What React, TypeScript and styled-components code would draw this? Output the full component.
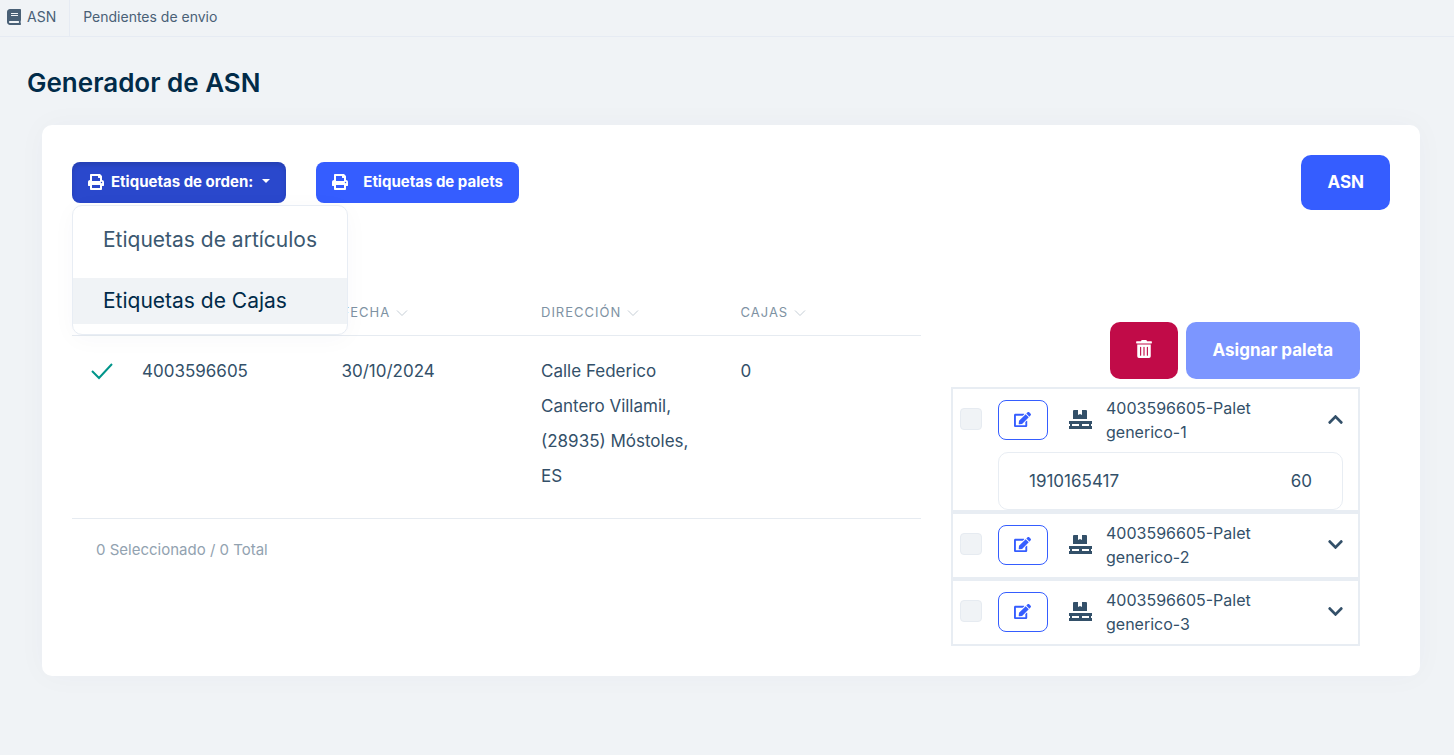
import React, { useState } from "react";
import styled, { createGlobalStyle, css } from "styled-components";
import { FaBook, FaChevronDown, FaChevronUp, FaEdit, FaPrint, FaTrashAlt } from "react-icons/fa";

const GlobalStyle = createGlobalStyle`
  *, *::before, *::after { box-sizing: border-box; }
  body {
    margin: 0;
    min-height: 100vh;
    background: #f0f3f6;
    color: #335069;
    font-family: Inter, "Liberation Sans", sans-serif;
    font-size: 16px;
    line-height: 24px;
  }
  button { font-family: inherit; cursor: pointer; }
`;

const TopBar = styled.nav`
  display: flex;
  height: 37px;
  border-bottom: 1px solid #e6ebf3;
`;

const TopLink = styled.a<{ $first?: boolean }>`
  display: flex;
  align-items: center;
  gap: 5px;
  padding: 0 13px 3px;
  color: #496076;
  font-size: 14px;
  line-height: 20px;
  text-decoration: none;
  ${(p) =>
    p.$first &&
    css`
      padding-left: 6px;
      border-right: 1px solid #e6ebf3;
    `}
`;

const Page = styled.main`
  padding: 28px 34px 79px 42px;
`;

const Title = styled.h1`
  margin: 0 0 24px -15px;
  color: #012b49;
  font-size: 26px;
  font-weight: 600;
  line-height: 36px;
`;

const Card = styled.section`
  padding: 30px;
  background: #fff;
  border-radius: 10px;
  box-shadow: 0 0 30px rgba(20, 60, 90, 0.03);
`;

const Toolbar = styled.div`
  display: flex;
  align-items: center;
  gap: 30px;
`;

const Button = styled.button<{ $size?: "small" | "large"; $tone?: "active" | "danger" | "muted" }>`
  display: inline-flex;
  align-items: center;
  justify-content: center;
  border: 0;
  color: #fff;
  font-weight: 700;
  background: ${(p) =>
    p.$tone === "active" ? "#2a48cc" : p.$tone === "danger" ? "#c10b48" : p.$tone === "muted" ? "#7c96ff" : "#355dff"};
  ${(p) =>
    p.$size === "small"
      ? css`
          height: 41px;
          padding: 0 16px 2px;
          border-radius: 8px;
          font-size: 15px;
        `
      : css`
          height: ${p.$size === "large" ? "57px" : "55px"};
          padding: 0 ${p.$tone === "muted" ? "27px" : "26px"} 1px;
          border-radius: 10px;
          font-size: 17px;
        `}
  ${(p) => p.$tone === "active" && css`box-shadow: inset 0 3px 5px rgba(0, 0, 0, 0.13);`}
`;

const PrintIcon = styled(FaPrint)<{ $gap: number }>`
  width: 16px;
  height: 16px;
  margin-right: ${(p) => p.$gap}px;
`;

const Caret = styled.span`
  margin: 0 0 1px 9px;
  border: 4px solid transparent;
  border-top-color: #fff;
  border-bottom: 0;
`;

const Dropdown = styled.div`
  position: relative;
`;

const Menu = styled.div`
  position: absolute;
  z-index: 2;
  top: calc(100% + 2px);
  left: 0;
  display: flex;
  flex-direction: column;
  gap: 15px;
  padding: 11px 0 10px;
  background: #fff;
  border: 1px solid #e8edf4;
  border-radius: 10px;
  box-shadow: 0 4px 24px rgba(20, 60, 90, 0.03);
`;

const MenuItem = styled.button<{ $active?: boolean }>`
  height: 46px;
  padding: 0 30px;
  border: 0;
  background: ${(p) => (p.$active ? "#f0f3f6" : "transparent")};
  color: ${(p) => (p.$active ? "#012b49" : "#3b5870")};
  font-size: 21px;
  line-height: 32px;
  text-align: left;
  white-space: nowrap;
`;

const Spacer = styled.span`
  flex: 1;
`;

const Body = styled.div`
  display: grid;
  grid-template-columns: minmax(0, 849fr) minmax(0, 409fr);
  gap: 30px;
  padding: 80px 30px 0 0;
`;

const Table = styled.table`
  width: 100%;
  table-layout: fixed;
  border-collapse: separate;
  border-spacing: 0;
`;

const HeadCell = styled.th<{ $icon?: boolean }>`
  width: ${(p) => (p.$icon ? "51px" : "auto")};
  height: 46px;
  padding: 0 19px 2px;
  border-bottom: 1px solid #e6ebf1;
  color: #7e92a3;
  font-size: 13px;
  font-weight: 400;
  line-height: 20px;
  letter-spacing: 1px;
  text-align: left;
  white-space: nowrap;
`;

const SortIcon = styled.svg`
  margin-left: 6px;
  color: #c5ced6;
  vertical-align: 0;
`;

const Cell = styled.td<{ $icon?: boolean }>`
  padding: 18px 19px 24px;
  ${(p) => p.$icon && css`padding: 26px 0 0 18px;`}
  border-bottom: 1px solid #e6ebf1;
  font-size: 17px;
  line-height: 35px;
  vertical-align: top;
`;

const CheckMark = styled.svg`
  display: block;
  color: #00958a;
`;

const Summary = styled.p`
  margin: 19px 24px 0;
  color: #92a2b0;
  font-size: 15px;
`;

const Pallets = styled.div`
  padding-top: 32px;
`;

const Actions = styled.div`
  display: flex;
  justify-content: flex-end;
  gap: 8px;
  margin-bottom: 8px;
`;

const TrashIcon = styled(FaTrashAlt)`
  width: 16px;
  height: 18px;
  margin-bottom: 2px;
`;

const List = styled.ul`
  margin: 0;
  padding: 0;
  list-style: none;
`;

const Item = styled.li`
  border: 2px solid #e8edf3;
`;

const ItemRow = styled.div`
  display: flex;
  align-items: center;
  padding: 7px 14px 8px 7px;
`;

const CheckBox = styled.input`
  appearance: none;
  width: 22px;
  height: 22px;
  margin: 0 16px 2px 0;
  background: #f0f3f6;
  border: 1px solid #e6ebf1;
  border-radius: 4px;
`;

const EditButton = styled.button`
  display: flex;
  align-items: center;
  justify-content: center;
  width: 50px;
  height: 40px;
  margin-right: 20px;
  padding: 0 1px 2px 0;
  background: #fff;
  border: 1px solid #355dff;
  border-radius: 8px;
  color: #355dff;
`;

const PalletName = styled.label`
  flex: 1;
  margin: 0 16px 0 14px;
`;

const Toggle = styled.button`
  display: flex;
  padding: 0 0 1px;
  border: 0;
  background: none;
  color: #335069;
`;

const Box = styled.div`
  display: flex;
  justify-content: space-between;
  margin: 0 15px 0 45px;
  padding: 10px 30px;
  border: 1px solid #e8edf3;
  border-radius: 10px;
  font-size: 17px;
  line-height: 36px;
`;

const pallets = [
  { name: "4003596605-Palet generico-1", boxes: [{ code: "1910165417", units: 60 }] },
  { name: "4003596605-Palet generico-2", boxes: [] },
  { name: "4003596605-Palet generico-3", boxes: [] },
];

const columns = ["Orden", "FECHA", "DIRECCIÓN", "CAJAS"];

function PalletIcon() {
  return (
    <svg width="24" height="20" viewBox="0 0 24 20" fill="currentColor" aria-hidden="true">
      <path d="M6 0h4v5l2-1 2 1V0h4q1 0 1 1v8H5V1q0-1 1-1z" />
      <path d="M1 11h23v3h-1v2h1v3H1v-3h1v-2H1zM4 14v2h7v-2zM14 14v2h7v-2z" fillRule="evenodd" />
    </svg>
  );
}

export default function App() {
  const [menuOpen, setMenuOpen] = useState(true);
  const [open, setOpen] = useState(0);

  return (
    <>
      <GlobalStyle />
      <TopBar>
        <TopLink href="#asn" $first>
          <FaBook size={16} />
          ASN
        </TopLink>
        <TopLink href="#pendientes">Pendientes de envio</TopLink>
      </TopBar>
      <Page>
        <Title>Generador de ASN</Title>
        <Card>
          <Toolbar>
            <Dropdown>
              <Button $size="small" $tone="active" aria-expanded={menuOpen} onClick={() => setMenuOpen(!menuOpen)}>
                <PrintIcon $gap={7} />
                Etiquetas de orden:
                <Caret />
              </Button>
              {menuOpen && (
                <Menu>
                  <MenuItem>Etiquetas de artículos</MenuItem>
                  <MenuItem $active>Etiquetas de Cajas</MenuItem>
                </Menu>
              )}
            </Dropdown>
            <Button $size="small">
              <PrintIcon $gap={15} />
              Etiquetas de palets
            </Button>
            <Spacer />
            <Button>ASN</Button>
          </Toolbar>
          <Body>
            <div>
              <Table>
                <thead>
                  <tr>
                    <HeadCell $icon />
                    {columns.map((name, i) => (
                      <HeadCell key={name}>
                        {i > 0 && (
                          <>
                            {name}
                            <SortIcon width="12" height="8" viewBox="0 0 12 8" fill="none" stroke="currentColor">
                              <path d="M1 1.5l5 5 5-5" />
                            </SortIcon>
                          </>
                        )}
                      </HeadCell>
                    ))}
                  </tr>
                </thead>
                <tbody>
                  <tr>
                    <Cell $icon>
                      <CheckMark width="24" height="18" viewBox="0 0 24 18" fill="none" stroke="currentColor" strokeWidth="2">
                        <path d="M2 9l7 7L22 2" />
                      </CheckMark>
                    </Cell>
                    <Cell>4003596605</Cell>
                    <Cell>30/10/2024</Cell>
                    <Cell>Calle Federico Cantero Villamil, (28935) Móstoles, ES</Cell>
                    <Cell>0</Cell>
                  </tr>
                </tbody>
              </Table>
              <Summary>0 Seleccionado / 0 Total</Summary>
            </div>
            <Pallets>
              <Actions>
                <Button $size="large" $tone="danger" aria-label="Eliminar">
                  <TrashIcon />
                </Button>
                <Button $size="large" $tone="muted">
                  Asignar paleta
                </Button>
              </Actions>
              <List>
                {pallets.map((pallet, i) => (
                  <Item key={pallet.name}>
                    <ItemRow>
                      <CheckBox type="checkbox" id={`pallet-${i}`} />
                      <EditButton aria-label="Editar">
                        <FaEdit size={17} />
                      </EditButton>
                      <PalletIcon />
                      <PalletName htmlFor={`pallet-${i}`}>{pallet.name}</PalletName>
                      <Toggle aria-label="Detalle" aria-expanded={open === i} onClick={() => setOpen(open === i ? -1 : i)}>
                        {open === i ? <FaChevronUp size={17} /> : <FaChevronDown size={17} />}
                      </Toggle>
                    </ItemRow>
                    {open === i &&
                      pallet.boxes.map((box) => (
                        <Box key={box.code}>
                          <span>{box.code}</span>
                          <span>{box.units}</span>
                        </Box>
                      ))}
                  </Item>
                ))}
              </List>
            </Pallets>
          </Body>
        </Card>
      </Page>
    </>
  );
}
